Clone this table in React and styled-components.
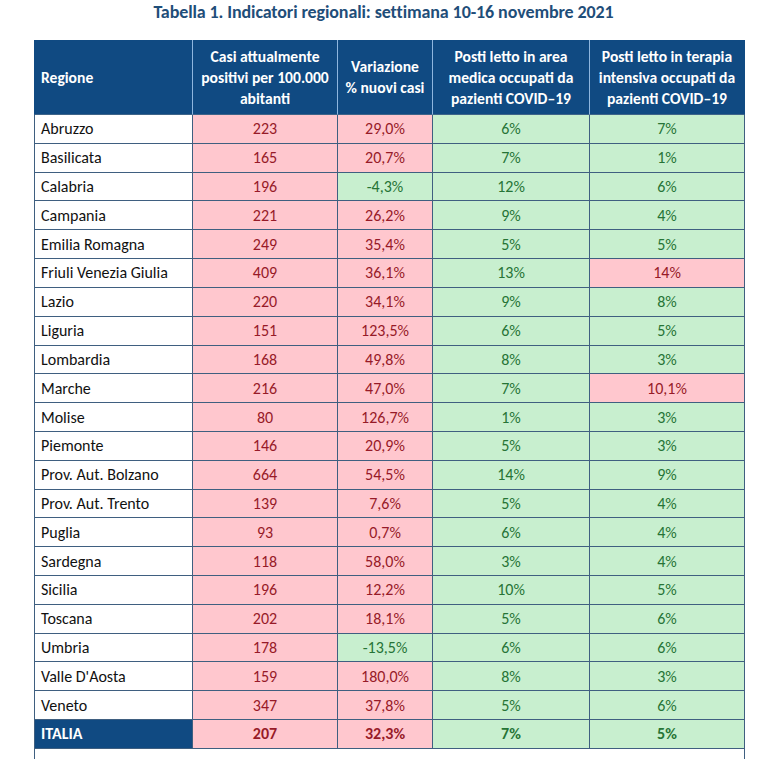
import React from "react";
import styled, { createGlobalStyle } from "styled-components";

const Global = createGlobalStyle`
  html, body { margin: 0; padding: 0; background: #ffffff; }
  body { font-family: Carlito, Calibri, Lato, "Liberation Sans", sans-serif; }
`;

const Page = styled.div`
  width: 765px;
  height: 759px;
  overflow: hidden;
  background: #fff;
`;

const Title = styled.h1`
  margin: 0;
  height: 40px;
  padding-top: 2px;
  padding-left: 2px;
  box-sizing: border-box;
  text-align: center;
  font-size: 18px;
  line-height: 21px;
  font-weight: 700;
  color: #1f4e79;
  letter-spacing: -0.1px;
`;

const Table = styled.div`
  margin-left: 34px;
  width: 711px;
  display: grid;
  grid-template-columns: 158px 145px 95px 157px 156px;
  grid-template-rows: 75px;
  grid-auto-rows: 28.82px;
`;

const HeadCell = styled.div`
  background: #104a82;
  color: #ffffff;
  font-weight: 700;
  font-size: 15.6px;
  line-height: 21px;
  display: flex;
  align-items: center;
  justify-content: ${(p) => (p.$left ? "flex-start" : "center")};
  text-align: ${(p) => (p.$left ? "left" : "center")};
  padding: 0 ${(p) => (p.$left ? "6px" : "1px")};
  box-sizing: border-box;
  white-space: nowrap;
  border-left: 1px solid ${(p) => (p.$first ? "#104a82" : "#8fb6de")};
  border-bottom: 1px solid #3e6489;
  ${(p) => p.$last && "border-right: 1px solid #104a82;"}
`;

const tones = {
  name: { bg: "#ffffff", fg: "#111111" },
  total: { bg: "#104a82", fg: "#ffffff" },
  bad: { bg: "#ffc7ce", fg: "#971a28" },
  good: { bg: "#c8efcf", fg: "#267436" },
};

const Cell = styled.div`
  background: ${(p) => tones[p.$tone].bg};
  color: ${(p) => tones[p.$tone].fg};
  font-size: 16px;
  font-weight: ${(p) => (p.$bold ? 700 : 400)};
  display: flex;
  align-items: center;
  justify-content: ${(p) => (p.$left ? "flex-start" : "center")};
  padding: 0 ${(p) => (p.$left ? "6px" : "0")};
  box-sizing: border-box;
  border-left: 1px solid #3f5f80;
  border-bottom: 1px solid #3f5f80;
  ${(p) => p.$last && "border-right: 1px solid #3f5f80;"}
  white-space: nowrap;
`;

const Footer = styled.div`
  margin-left: 34px;
  width: 711px;
  height: 20px;
  box-sizing: border-box;
  border-left: 1px solid #3f5f80;
  border-right: 1px solid #3f5f80;
`;

const rows = [
  ["Abruzzo", "223", "29,0%", "6%", "7%"],
  ["Basilicata", "165", "20,7%", "7%", "1%"],
  ["Calabria", "196", "-4,3%", "12%", "6%"],
  ["Campania", "221", "26,2%", "9%", "4%"],
  ["Emilia Romagna", "249", "35,4%", "5%", "5%"],
  ["Friuli Venezia Giulia", "409", "36,1%", "13%", "14%"],
  ["Lazio", "220", "34,1%", "9%", "8%"],
  ["Liguria", "151", "123,5%", "6%", "5%"],
  ["Lombardia", "168", "49,8%", "8%", "3%"],
  ["Marche", "216", "47,0%", "7%", "10,1%"],
  ["Molise", "80", "126,7%", "1%", "3%"],
  ["Piemonte", "146", "20,9%", "5%", "3%"],
  ["Prov. Aut. Bolzano", "664", "54,5%", "14%", "9%"],
  ["Prov. Aut. Trento", "139", "7,6%", "5%", "4%"],
  ["Puglia", "93", "0,7%", "6%", "4%"],
  ["Sardegna", "118", "58,0%", "3%", "4%"],
  ["Sicilia", "196", "12,2%", "10%", "5%"],
  ["Toscana", "202", "18,1%", "5%", "6%"],
  ["Umbria", "178", "-13,5%", "6%", "6%"],
  ["Valle D'Aosta", "159", "180,0%", "8%", "3%"],
  ["Veneto", "347", "37,8%", "5%", "6%"],
];

function toneFor(row, col) {
  if (col === 1) return "bad";
  if (col === 2) return row[0] === "Calabria" || row[0] === "Umbria" ? "good" : "bad";
  if (col === 3) return "good";
  return row[0] === "Friuli Venezia Giulia" || row[0] === "Marche" ? "bad" : "good";
}

export default function App() {
  return (
    <Page>
      <Global />
      <Title>Tabella 1. Indicatori regionali: settimana 10-16 novembre 2021</Title>
      <Table>
        <HeadCell $left $first>Regione</HeadCell>
        <HeadCell>Casi attualmente<br />positivi per 100.000<br />abitanti</HeadCell>
        <HeadCell>Variazione<br />% nuovi casi</HeadCell>
        <HeadCell>Posti letto in area<br />medica occupati da<br />pazienti COVID–19</HeadCell>
        <HeadCell $last>Posti letto in terapia<br />intensiva occupati da<br />pazienti COVID–19</HeadCell>
        {rows.map((r) => (
          <React.Fragment key={r[0]}>
            <Cell $tone="name" $left>{r[0]}</Cell>
            {[1, 2, 3, 4].map((c) => (
              <Cell key={c} $tone={toneFor(r, c)} $last={c === 4}>{r[c]}</Cell>
            ))}
          </React.Fragment>
        ))}
        <Cell $tone="total" $left $bold>ITALIA</Cell>
        <Cell $tone="bad" $bold>207</Cell>
        <Cell $tone="bad" $bold>32,3%</Cell>
        <Cell $tone="good" $bold>7%</Cell>
        <Cell $tone="good" $bold $last>5%</Cell>
      </Table>
      <Footer />
    </Page>
  );
}
